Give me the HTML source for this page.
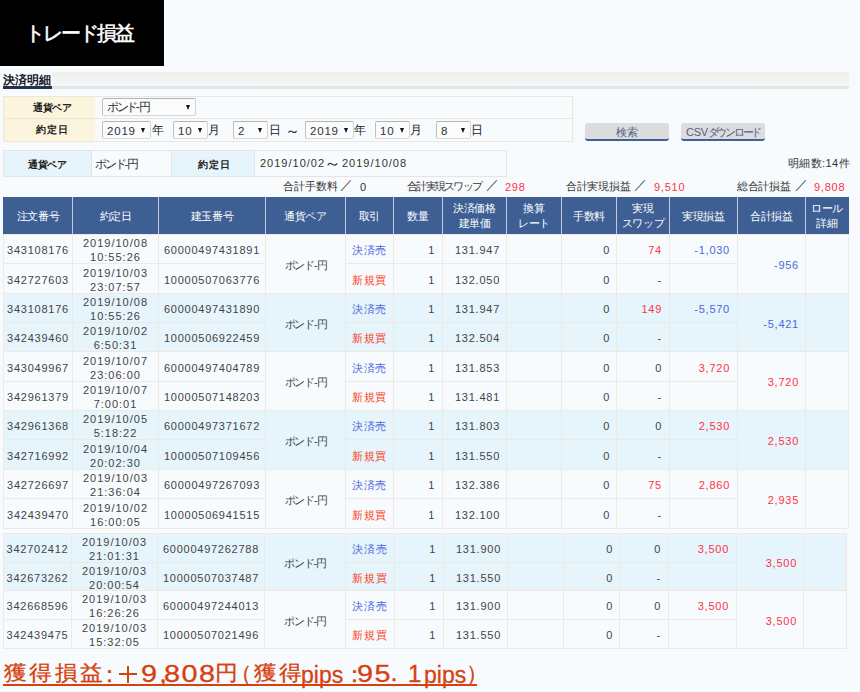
<!DOCTYPE html>
<html lang="ja"><head><meta charset="utf-8"><style>
html,body{margin:0;padding:0;}
i{font-style:normal;letter-spacing:0;margin-right:-1px}
body{width:860px;height:692px;overflow:hidden;background:#f7fbfe;font-family:"Liberation Sans",sans-serif;position:relative;}
body>div{position:absolute;box-sizing:border-box;}
.sel{background:#f9fbfd;border:1px solid;border-color:#b4b4b4 #d4d4d4 #d8d8d8 #c0c0c0;border-radius:2px;font-size:12px;color:#333;}
.sel .sj{position:absolute;left:4px;top:0px;font-size:12px;letter-spacing:-2.4px;}
.sel .sn{position:absolute;left:4px;top:1px;font-size:11.5px;letter-spacing:0.8px;}
.sel .arr{position:absolute;right:5px;top:6px;width:0;height:0;border-left:2.6px solid transparent;border-right:2.6px solid transparent;border-top:5.5px solid #111;}
.jt{font-size:12px;color:#222;line-height:18px;height:18px;}
.sn2{font-size:11px;color:#333;letter-spacing:1px;white-space:nowrap;line-height:16px;height:16px;}
.wv{font-size:15px;letter-spacing:0;margin-top:-1px;}
.tl{font-size:11px;color:#333;white-space:nowrap;line-height:16px;height:16px;}
.tn{font-size:11px;color:#333;white-space:nowrap;line-height:16px;height:16px;letter-spacing:0.75px;padding-top:1px;}
.btn{background:#dcdcdc;border-bottom:2px solid #3f5f99;border-radius:3px;text-align:center;font-size:11px;color:#52608a;white-space:nowrap;padding-top:1px;}
.hd2{padding-top:0 !important;}
.hd{color:#fff;font-size:11px;letter-spacing:-0.4px;padding-top:2px;display:flex;align-items:center;justify-content:center;text-align:center;line-height:15px;}
.c{display:flex;align-items:center;font-size:11px;letter-spacing:0.75px;line-height:14px;white-space:nowrap;padding-top:2px;}
.dt{letter-spacing:1px;}
.pd{letter-spacing:-1.25px;}
.ctr{justify-content:center;}
.rgt{justify-content:flex-end;}
.jp{font-size:11px;}
.ft{color:#d8400e;white-space:nowrap;line-height:30px;-webkit-text-stroke:0.3px #d8400e;}
</style></head><body>
<div style="left:0px;top:0px;width:165px;height:67px;background:#000;border-right:1px solid #fff;border-bottom:1px solid #fff;"></div>
<div style="left:25px;top:19px;color:#fff;font-size:20px;font-weight:normal;-webkit-text-stroke:0.5px #fff;line-height:28px;letter-spacing:-2.0px;white-space:nowrap;">トレード損益</div>
<div style="left:52px;top:72px;width:797px;height:14px;background:linear-gradient(#efeeea,#f2f3f2 50%,#f6f8f9);"></div>
<div style="left:52px;top:86px;width:797px;height:3px;background:#e6e4e4;"></div>
<div style="left:3px;top:86px;width:49px;height:3px;background:#22304e;"></div>
<div style="left:3px;top:72px;font-size:12px;font-weight:bold;color:#1a1a2a;line-height:16px;letter-spacing:0px;white-space:nowrap;">決済明細</div>
<div style="left:3px;top:96px;width:570px;height:46px;background:#f7fbfe;border:1px solid #eee6d6;box-sizing:border-box;"></div>
<div style="left:4px;top:97px;width:91px;height:21px;background:#fcf5de;"></div>
<div style="left:4px;top:119px;width:91px;height:22px;background:#fcf5de;"></div>
<div style="left:4px;top:118px;width:568px;height:1px;background:#f0e4d8;"></div>
<div style="left:7px;top:96px;width:91px;height:21px;line-height:21px;text-align:center;font-size:10px;font-weight:bold;color:#222;letter-spacing:-0.2px;padding-top:1px;">通貨ペア</div>
<div style="left:7px;top:118px;width:91px;height:22px;line-height:22px;text-align:center;font-size:10px;font-weight:bold;color:#222;letter-spacing:1px;padding-top:1px;">約定日</div>
<div class="sel" style="left:102px;top:98px;width:94px;height:18px;line-height:16px;"><span class="sj">ポンド<i>-</i>円</span><span class="arr"></span></div>
<div class="sel" style="left:102px;top:121px;width:49px;height:18px;line-height:16px;"><span class="sn">2019</span><span class="arr"></span></div>
<div class="jt" style="left:152px;top:121px;">年</div>
<div class="sel" style="left:173px;top:121px;width:35px;height:18px;line-height:16px;"><span class="sn">10</span><span class="arr"></span></div>
<div class="jt" style="left:208px;top:121px;">月</div>
<div class="sel" style="left:233px;top:121px;width:35px;height:18px;line-height:16px;"><span class="sn">2</span><span class="arr"></span></div>
<div class="jt" style="left:269px;top:121px;">日</div>
<div class="jt" style="left:285px;top:122px;font-size:15px">～</div>
<div class="sel" style="left:305px;top:121px;width:49px;height:18px;line-height:16px;"><span class="sn">2019</span><span class="arr"></span></div>
<div class="jt" style="left:354px;top:121px;">年</div>
<div class="sel" style="left:375px;top:121px;width:35px;height:18px;line-height:16px;"><span class="sn">10</span><span class="arr"></span></div>
<div class="jt" style="left:410px;top:121px;">月</div>
<div class="sel" style="left:436px;top:121px;width:35px;height:18px;line-height:16px;"><span class="sn">8</span><span class="arr"></span></div>
<div class="jt" style="left:471px;top:121px;">日</div>
<div class="btn" style="left:585px;top:123px;width:84px;height:18px;line-height:17px;letter-spacing:0px">検索</div>
<div class="btn" style="left:681px;top:123px;width:84px;height:18px;line-height:17px;letter-spacing:-2.3px"><span style="letter-spacing:-0.3px">CSV</span>ダウンロード</div>
<div style="left:3px;top:150px;width:504px;height:27px;background:#f8fbfe;border:1px solid #ece4dc;box-sizing:border-box;"></div>
<div style="left:4px;top:151px;width:87px;height:25px;background:#e6f4fb;"></div>
<div style="left:91px;top:151px;width:1px;height:25px;background:#e6e2e2;"></div>
<div style="left:171px;top:151px;width:84px;height:25px;background:#e6f4fb;border-left:1px solid #e6e2e2;border-right:1px solid #e6e2e2;"></div>
<div style="left:4px;top:151px;width:87px;height:25px;line-height:25px;text-align:center;font-size:10px;font-weight:bold;color:#222;letter-spacing:-0.2px;padding-top:1px;">通貨ペア</div>
<div style="left:95px;top:151px;height:25px;line-height:25px;font-size:11.5px;color:#333;letter-spacing:-2.2px;padding-top:1px;">ポンド<i>-</i>円</div>
<div style="left:172px;top:151px;width:84px;height:25px;line-height:25px;text-align:center;font-size:10px;font-weight:bold;color:#222;letter-spacing:1px;padding-top:1px;">約定日</div>
<div class="sn2" style="left:260px;top:155px;">2019/10/02</div>
<div class="sn2 wv" style="left:324px;top:157px;font-size:17px">～</div>
<div class="sn2" style="left:342px;top:155px;">2019/10/08</div>
<div class="sn2" style="left:600px;top:155px;width:250px;text-align:right;letter-spacing:0.4px">明細数:14件</div>
<div class="tl" style="left:283px;top:178px;letter-spacing:0px">合計手数料</div>
<div class="tl" style="left:340px;top:177px;font-size:12.5px">／</div>
<div class="tn" style="left:360px;top:178px;color:#333">0</div>
<div class="tl" style="left:407px;top:178px;letter-spacing:-1.75px">合計実現スワップ</div>
<div class="tl" style="left:486px;top:177px;font-size:12.5px">／</div>
<div class="tn" style="left:505px;top:178px;color:#ff3344">298</div>
<div class="tl" style="left:566px;top:178px;letter-spacing:-0.3px">合計実現損益</div>
<div class="tl" style="left:634px;top:177px;font-size:12.5px">／</div>
<div class="tn" style="left:654px;top:178px;color:#ff3344">9,510</div>
<div class="tl" style="left:737px;top:178px;letter-spacing:-0.3px">総合計損益</div>
<div class="tl" style="left:795px;top:177px;font-size:12.5px">／</div>
<div class="tn" style="left:814px;top:178px;color:#ff3344">9,808</div>
<div style="left:3px;top:197px;width:846px;height:37px;background:#3d5f94;"></div>
<div style="left:72px;top:197px;width:1px;height:37px;background:#c4c8dc;"></div>
<div style="left:158px;top:197px;width:1px;height:37px;background:#c4c8dc;"></div>
<div style="left:265px;top:197px;width:1px;height:37px;background:#c4c8dc;"></div>
<div style="left:345px;top:197px;width:1px;height:37px;background:#c4c8dc;"></div>
<div style="left:393px;top:197px;width:1px;height:37px;background:#c4c8dc;"></div>
<div style="left:442px;top:197px;width:1px;height:37px;background:#c4c8dc;"></div>
<div style="left:506px;top:197px;width:1px;height:37px;background:#c4c8dc;"></div>
<div style="left:561px;top:197px;width:1px;height:37px;background:#c4c8dc;"></div>
<div style="left:616px;top:197px;width:1px;height:37px;background:#c4c8dc;"></div>
<div style="left:669px;top:197px;width:1px;height:37px;background:#c4c8dc;"></div>
<div style="left:737px;top:197px;width:1px;height:37px;background:#c4c8dc;"></div>
<div style="left:805px;top:197px;width:1px;height:37px;background:#c4c8dc;"></div>
<div class="hd" style="left:4px;top:197px;width:68px;height:37px;"><div class="hi">注文番号</div></div>
<div class="hd" style="left:73px;top:197px;width:85px;height:37px;"><div class="hi">約定日</div></div>
<div class="hd" style="left:159px;top:197px;width:106px;height:37px;"><div class="hi">建玉番号</div></div>
<div class="hd" style="left:266px;top:197px;width:79px;height:37px;"><div class="hi">通貨ペア</div></div>
<div class="hd" style="left:346px;top:197px;width:47px;height:37px;"><div class="hi">取引</div></div>
<div class="hd" style="left:394px;top:197px;width:48px;height:37px;"><div class="hi">数量</div></div>
<div class="hd hd2" style="left:443px;top:197px;width:63px;height:37px;"><div class="hi">決済価格<br>建単価</div></div>
<div class="hd hd2" style="left:507px;top:197px;width:54px;height:37px;"><div class="hi">換算<br>レート</div></div>
<div class="hd" style="left:562px;top:197px;width:54px;height:37px;"><div class="hi">手数料</div></div>
<div class="hd hd2" style="left:617px;top:197px;width:52px;height:37px;"><div class="hi">実現<br>スワップ</div></div>
<div class="hd" style="left:670px;top:197px;width:67px;height:37px;"><div class="hi">実現損益</div></div>
<div class="hd" style="left:738px;top:197px;width:67px;height:37px;"><div class="hi">合計損益</div></div>
<div class="hd hd2" style="left:806px;top:197px;width:42px;height:37px;"><div class="hi">ロール<br>詳細</div></div>
<div style="left:3px;top:234px;width:846px;height:59px;background:#f7fbfe;"></div>
<div style="left:3px;top:293px;width:846px;height:58px;background:#e6f4fb;"></div>
<div style="left:3px;top:351px;width:846px;height:59px;background:#f7fbfe;"></div>
<div style="left:3px;top:410px;width:846px;height:59px;background:#e6f4fb;"></div>
<div style="left:3px;top:469px;width:846px;height:59px;background:#f7fbfe;"></div>
<div style="left:3px;top:234px;width:1px;height:295px;background:#eeeae3;"></div>
<div style="left:72px;top:234px;width:1px;height:295px;background:#eeeae3;"></div>
<div style="left:158px;top:234px;width:1px;height:295px;background:#eeeae3;"></div>
<div style="left:265px;top:234px;width:1px;height:295px;background:#eeeae3;"></div>
<div style="left:345px;top:234px;width:1px;height:295px;background:#eeeae3;"></div>
<div style="left:393px;top:234px;width:1px;height:295px;background:#eeeae3;"></div>
<div style="left:442px;top:234px;width:1px;height:295px;background:#eeeae3;"></div>
<div style="left:506px;top:234px;width:1px;height:295px;background:#eeeae3;"></div>
<div style="left:561px;top:234px;width:1px;height:295px;background:#eeeae3;"></div>
<div style="left:616px;top:234px;width:1px;height:295px;background:#eeeae3;"></div>
<div style="left:669px;top:234px;width:1px;height:295px;background:#eeeae3;"></div>
<div style="left:737px;top:234px;width:1px;height:295px;background:#eeeae3;"></div>
<div style="left:805px;top:234px;width:1px;height:295px;background:#eeeae3;"></div>
<div style="left:848px;top:234px;width:1px;height:295px;background:#eeeae3;"></div>
<div style="left:3px;top:234px;width:846px;height:1px;background:#eeeae3;"></div>
<div style="left:3px;top:263px;width:70px;height:1px;background:#eeeae3;"></div>
<div style="left:72px;top:263px;width:87px;height:1px;background:#eeeae3;"></div>
<div style="left:158px;top:263px;width:108px;height:1px;background:#eeeae3;"></div>
<div style="left:345px;top:263px;width:49px;height:1px;background:#eeeae3;"></div>
<div style="left:393px;top:263px;width:50px;height:1px;background:#eeeae3;"></div>
<div style="left:442px;top:263px;width:65px;height:1px;background:#eeeae3;"></div>
<div style="left:506px;top:263px;width:56px;height:1px;background:#eeeae3;"></div>
<div style="left:561px;top:263px;width:56px;height:1px;background:#eeeae3;"></div>
<div style="left:616px;top:263px;width:54px;height:1px;background:#eeeae3;"></div>
<div style="left:669px;top:263px;width:69px;height:1px;background:#eeeae3;"></div>
<div style="left:3px;top:293px;width:846px;height:1px;background:#eeeae3;"></div>
<div style="left:3px;top:322px;width:70px;height:1px;background:#eeeae3;"></div>
<div style="left:72px;top:322px;width:87px;height:1px;background:#eeeae3;"></div>
<div style="left:158px;top:322px;width:108px;height:1px;background:#eeeae3;"></div>
<div style="left:345px;top:322px;width:49px;height:1px;background:#eeeae3;"></div>
<div style="left:393px;top:322px;width:50px;height:1px;background:#eeeae3;"></div>
<div style="left:442px;top:322px;width:65px;height:1px;background:#eeeae3;"></div>
<div style="left:506px;top:322px;width:56px;height:1px;background:#eeeae3;"></div>
<div style="left:561px;top:322px;width:56px;height:1px;background:#eeeae3;"></div>
<div style="left:616px;top:322px;width:54px;height:1px;background:#eeeae3;"></div>
<div style="left:669px;top:322px;width:69px;height:1px;background:#eeeae3;"></div>
<div style="left:3px;top:351px;width:846px;height:1px;background:#eeeae3;"></div>
<div style="left:3px;top:381px;width:70px;height:1px;background:#eeeae3;"></div>
<div style="left:72px;top:381px;width:87px;height:1px;background:#eeeae3;"></div>
<div style="left:158px;top:381px;width:108px;height:1px;background:#eeeae3;"></div>
<div style="left:345px;top:381px;width:49px;height:1px;background:#eeeae3;"></div>
<div style="left:393px;top:381px;width:50px;height:1px;background:#eeeae3;"></div>
<div style="left:442px;top:381px;width:65px;height:1px;background:#eeeae3;"></div>
<div style="left:506px;top:381px;width:56px;height:1px;background:#eeeae3;"></div>
<div style="left:561px;top:381px;width:56px;height:1px;background:#eeeae3;"></div>
<div style="left:616px;top:381px;width:54px;height:1px;background:#eeeae3;"></div>
<div style="left:669px;top:381px;width:69px;height:1px;background:#eeeae3;"></div>
<div style="left:3px;top:410px;width:846px;height:1px;background:#eeeae3;"></div>
<div style="left:3px;top:439px;width:70px;height:1px;background:#eeeae3;"></div>
<div style="left:72px;top:439px;width:87px;height:1px;background:#eeeae3;"></div>
<div style="left:158px;top:439px;width:108px;height:1px;background:#eeeae3;"></div>
<div style="left:345px;top:439px;width:49px;height:1px;background:#eeeae3;"></div>
<div style="left:393px;top:439px;width:50px;height:1px;background:#eeeae3;"></div>
<div style="left:442px;top:439px;width:65px;height:1px;background:#eeeae3;"></div>
<div style="left:506px;top:439px;width:56px;height:1px;background:#eeeae3;"></div>
<div style="left:561px;top:439px;width:56px;height:1px;background:#eeeae3;"></div>
<div style="left:616px;top:439px;width:54px;height:1px;background:#eeeae3;"></div>
<div style="left:669px;top:439px;width:69px;height:1px;background:#eeeae3;"></div>
<div style="left:3px;top:469px;width:846px;height:1px;background:#eeeae3;"></div>
<div style="left:3px;top:498px;width:70px;height:1px;background:#eeeae3;"></div>
<div style="left:72px;top:498px;width:87px;height:1px;background:#eeeae3;"></div>
<div style="left:158px;top:498px;width:108px;height:1px;background:#eeeae3;"></div>
<div style="left:345px;top:498px;width:49px;height:1px;background:#eeeae3;"></div>
<div style="left:393px;top:498px;width:50px;height:1px;background:#eeeae3;"></div>
<div style="left:442px;top:498px;width:65px;height:1px;background:#eeeae3;"></div>
<div style="left:506px;top:498px;width:56px;height:1px;background:#eeeae3;"></div>
<div style="left:561px;top:498px;width:56px;height:1px;background:#eeeae3;"></div>
<div style="left:616px;top:498px;width:54px;height:1px;background:#eeeae3;"></div>
<div style="left:669px;top:498px;width:69px;height:1px;background:#eeeae3;"></div>
<div style="left:3px;top:528px;width:846px;height:1px;background:#eeeae3;"></div>
<div class="c ctr" style="left:4px;top:235px;width:68px;height:28px;text-align:center;color:#444444;"><div class="ci">343108176</div></div>
<div class="c dt ctr" style="left:73px;top:235px;width:85px;height:28px;text-align:center;color:#444444;"><div class="ci">2019/10/08<br>10:55:26</div></div>
<div class="c ctr" style="left:159px;top:235px;width:106px;height:28px;text-align:center;color:#444444;"><div class="ci">60000497431891</div></div>
<div class="c jp ctr" style="left:346px;top:235px;width:47px;height:28px;text-align:center;color:#4a66dd;"><div class="ci">決済売</div></div>
<div class="c rgt" style="left:394px;top:235px;width:48px;height:28px;text-align:right;color:#444444;padding-right:7px;"><div class="ci">1</div></div>
<div class="c rgt" style="left:443px;top:235px;width:63px;height:28px;text-align:right;color:#444444;padding-right:6px;"><div class="ci">131.947</div></div>
<div class="c rgt" style="left:562px;top:235px;width:54px;height:28px;text-align:right;color:#444444;padding-right:6px;"><div class="ci">0</div></div>
<div class="c rgt" style="left:617px;top:235px;width:52px;height:28px;text-align:right;color:#ff3344;padding-right:7px;"><div class="ci">74</div></div>
<div class="c rgt" style="left:670px;top:235px;width:67px;height:28px;text-align:right;color:#4a66dd;padding-right:7px;"><div class="ci">-1,030</div></div>
<div class="c ctr" style="left:4px;top:264px;width:68px;height:29px;text-align:center;color:#444444;"><div class="ci">342727603</div></div>
<div class="c dt ctr" style="left:73px;top:264px;width:85px;height:29px;text-align:center;color:#444444;"><div class="ci">2019/10/03<br>23:07:57</div></div>
<div class="c ctr" style="left:159px;top:264px;width:106px;height:29px;text-align:center;color:#444444;"><div class="ci">10000507063776</div></div>
<div class="c jp ctr" style="left:346px;top:264px;width:47px;height:29px;text-align:center;color:#ff3b22;"><div class="ci">新規買</div></div>
<div class="c rgt" style="left:394px;top:264px;width:48px;height:29px;text-align:right;color:#444444;padding-right:7px;"><div class="ci">1</div></div>
<div class="c rgt" style="left:443px;top:264px;width:63px;height:29px;text-align:right;color:#444444;padding-right:6px;"><div class="ci">132.050</div></div>
<div class="c rgt" style="left:562px;top:264px;width:54px;height:29px;text-align:right;color:#444444;padding-right:6px;"><div class="ci">0</div></div>
<div class="c rgt" style="left:617px;top:264px;width:52px;height:29px;text-align:right;color:#444444;padding-right:7px;"><div class="ci">-</div></div>
<div class="c rgt" style="left:670px;top:264px;width:67px;height:29px;text-align:right;color:#444444;padding-right:7px;"><div class="ci"></div></div>
<div class="c jp pd ctr" style="left:266px;top:235px;width:79px;height:58px;text-align:center;color:#444444;"><div class="ci">ポンド<i>-</i>円</div></div>
<div class="c rgt" style="left:738px;top:235px;width:67px;height:58px;text-align:right;color:#4a66dd;padding-right:6px;"><div class="ci">-956</div></div>
<div class="c ctr" style="left:4px;top:294px;width:68px;height:28px;text-align:center;color:#444444;"><div class="ci">343108176</div></div>
<div class="c dt ctr" style="left:73px;top:294px;width:85px;height:28px;text-align:center;color:#444444;"><div class="ci">2019/10/08<br>10:55:26</div></div>
<div class="c ctr" style="left:159px;top:294px;width:106px;height:28px;text-align:center;color:#444444;"><div class="ci">60000497431890</div></div>
<div class="c jp ctr" style="left:346px;top:294px;width:47px;height:28px;text-align:center;color:#4a66dd;"><div class="ci">決済売</div></div>
<div class="c rgt" style="left:394px;top:294px;width:48px;height:28px;text-align:right;color:#444444;padding-right:7px;"><div class="ci">1</div></div>
<div class="c rgt" style="left:443px;top:294px;width:63px;height:28px;text-align:right;color:#444444;padding-right:6px;"><div class="ci">131.947</div></div>
<div class="c rgt" style="left:562px;top:294px;width:54px;height:28px;text-align:right;color:#444444;padding-right:6px;"><div class="ci">0</div></div>
<div class="c rgt" style="left:617px;top:294px;width:52px;height:28px;text-align:right;color:#ff3344;padding-right:7px;"><div class="ci">149</div></div>
<div class="c rgt" style="left:670px;top:294px;width:67px;height:28px;text-align:right;color:#4a66dd;padding-right:7px;"><div class="ci">-5,570</div></div>
<div class="c ctr" style="left:4px;top:323px;width:68px;height:28px;text-align:center;color:#444444;"><div class="ci">342439460</div></div>
<div class="c dt ctr" style="left:73px;top:323px;width:85px;height:28px;text-align:center;color:#444444;"><div class="ci">2019/10/02<br>6:50:31</div></div>
<div class="c ctr" style="left:159px;top:323px;width:106px;height:28px;text-align:center;color:#444444;"><div class="ci">10000506922459</div></div>
<div class="c jp ctr" style="left:346px;top:323px;width:47px;height:28px;text-align:center;color:#ff3b22;"><div class="ci">新規買</div></div>
<div class="c rgt" style="left:394px;top:323px;width:48px;height:28px;text-align:right;color:#444444;padding-right:7px;"><div class="ci">1</div></div>
<div class="c rgt" style="left:443px;top:323px;width:63px;height:28px;text-align:right;color:#444444;padding-right:6px;"><div class="ci">132.504</div></div>
<div class="c rgt" style="left:562px;top:323px;width:54px;height:28px;text-align:right;color:#444444;padding-right:6px;"><div class="ci">0</div></div>
<div class="c rgt" style="left:617px;top:323px;width:52px;height:28px;text-align:right;color:#444444;padding-right:7px;"><div class="ci">-</div></div>
<div class="c rgt" style="left:670px;top:323px;width:67px;height:28px;text-align:right;color:#444444;padding-right:7px;"><div class="ci"></div></div>
<div class="c jp pd ctr" style="left:266px;top:294px;width:79px;height:57px;text-align:center;color:#444444;"><div class="ci">ポンド<i>-</i>円</div></div>
<div class="c rgt" style="left:738px;top:294px;width:67px;height:57px;text-align:right;color:#4a66dd;padding-right:6px;"><div class="ci">-5,421</div></div>
<div class="c ctr" style="left:4px;top:352px;width:68px;height:29px;text-align:center;color:#444444;"><div class="ci">343049967</div></div>
<div class="c dt ctr" style="left:73px;top:352px;width:85px;height:29px;text-align:center;color:#444444;"><div class="ci">2019/10/07<br>23:06:00</div></div>
<div class="c ctr" style="left:159px;top:352px;width:106px;height:29px;text-align:center;color:#444444;"><div class="ci">60000497404789</div></div>
<div class="c jp ctr" style="left:346px;top:352px;width:47px;height:29px;text-align:center;color:#4a66dd;"><div class="ci">決済売</div></div>
<div class="c rgt" style="left:394px;top:352px;width:48px;height:29px;text-align:right;color:#444444;padding-right:7px;"><div class="ci">1</div></div>
<div class="c rgt" style="left:443px;top:352px;width:63px;height:29px;text-align:right;color:#444444;padding-right:6px;"><div class="ci">131.853</div></div>
<div class="c rgt" style="left:562px;top:352px;width:54px;height:29px;text-align:right;color:#444444;padding-right:6px;"><div class="ci">0</div></div>
<div class="c rgt" style="left:617px;top:352px;width:52px;height:29px;text-align:right;color:#444444;padding-right:7px;"><div class="ci">0</div></div>
<div class="c rgt" style="left:670px;top:352px;width:67px;height:29px;text-align:right;color:#ff3344;padding-right:7px;"><div class="ci">3,720</div></div>
<div class="c ctr" style="left:4px;top:382px;width:68px;height:28px;text-align:center;color:#444444;"><div class="ci">342961379</div></div>
<div class="c dt ctr" style="left:73px;top:382px;width:85px;height:28px;text-align:center;color:#444444;"><div class="ci">2019/10/07<br>7:00:01</div></div>
<div class="c ctr" style="left:159px;top:382px;width:106px;height:28px;text-align:center;color:#444444;"><div class="ci">10000507148203</div></div>
<div class="c jp ctr" style="left:346px;top:382px;width:47px;height:28px;text-align:center;color:#ff3b22;"><div class="ci">新規買</div></div>
<div class="c rgt" style="left:394px;top:382px;width:48px;height:28px;text-align:right;color:#444444;padding-right:7px;"><div class="ci">1</div></div>
<div class="c rgt" style="left:443px;top:382px;width:63px;height:28px;text-align:right;color:#444444;padding-right:6px;"><div class="ci">131.481</div></div>
<div class="c rgt" style="left:562px;top:382px;width:54px;height:28px;text-align:right;color:#444444;padding-right:6px;"><div class="ci">0</div></div>
<div class="c rgt" style="left:617px;top:382px;width:52px;height:28px;text-align:right;color:#444444;padding-right:7px;"><div class="ci">-</div></div>
<div class="c rgt" style="left:670px;top:382px;width:67px;height:28px;text-align:right;color:#444444;padding-right:7px;"><div class="ci"></div></div>
<div class="c jp pd ctr" style="left:266px;top:352px;width:79px;height:58px;text-align:center;color:#444444;"><div class="ci">ポンド<i>-</i>円</div></div>
<div class="c rgt" style="left:738px;top:352px;width:67px;height:58px;text-align:right;color:#ff3344;padding-right:6px;"><div class="ci">3,720</div></div>
<div class="c ctr" style="left:4px;top:411px;width:68px;height:28px;text-align:center;color:#444444;"><div class="ci">342961368</div></div>
<div class="c dt ctr" style="left:73px;top:411px;width:85px;height:28px;text-align:center;color:#444444;"><div class="ci">2019/10/05<br>5:18:22</div></div>
<div class="c ctr" style="left:159px;top:411px;width:106px;height:28px;text-align:center;color:#444444;"><div class="ci">60000497371672</div></div>
<div class="c jp ctr" style="left:346px;top:411px;width:47px;height:28px;text-align:center;color:#4a66dd;"><div class="ci">決済売</div></div>
<div class="c rgt" style="left:394px;top:411px;width:48px;height:28px;text-align:right;color:#444444;padding-right:7px;"><div class="ci">1</div></div>
<div class="c rgt" style="left:443px;top:411px;width:63px;height:28px;text-align:right;color:#444444;padding-right:6px;"><div class="ci">131.803</div></div>
<div class="c rgt" style="left:562px;top:411px;width:54px;height:28px;text-align:right;color:#444444;padding-right:6px;"><div class="ci">0</div></div>
<div class="c rgt" style="left:617px;top:411px;width:52px;height:28px;text-align:right;color:#444444;padding-right:7px;"><div class="ci">0</div></div>
<div class="c rgt" style="left:670px;top:411px;width:67px;height:28px;text-align:right;color:#ff3344;padding-right:7px;"><div class="ci">2,530</div></div>
<div class="c ctr" style="left:4px;top:440px;width:68px;height:29px;text-align:center;color:#444444;"><div class="ci">342716992</div></div>
<div class="c dt ctr" style="left:73px;top:440px;width:85px;height:29px;text-align:center;color:#444444;"><div class="ci">2019/10/04<br>20:02:30</div></div>
<div class="c ctr" style="left:159px;top:440px;width:106px;height:29px;text-align:center;color:#444444;"><div class="ci">10000507109456</div></div>
<div class="c jp ctr" style="left:346px;top:440px;width:47px;height:29px;text-align:center;color:#ff3b22;"><div class="ci">新規買</div></div>
<div class="c rgt" style="left:394px;top:440px;width:48px;height:29px;text-align:right;color:#444444;padding-right:7px;"><div class="ci">1</div></div>
<div class="c rgt" style="left:443px;top:440px;width:63px;height:29px;text-align:right;color:#444444;padding-right:6px;"><div class="ci">131.550</div></div>
<div class="c rgt" style="left:562px;top:440px;width:54px;height:29px;text-align:right;color:#444444;padding-right:6px;"><div class="ci">0</div></div>
<div class="c rgt" style="left:617px;top:440px;width:52px;height:29px;text-align:right;color:#444444;padding-right:7px;"><div class="ci">-</div></div>
<div class="c rgt" style="left:670px;top:440px;width:67px;height:29px;text-align:right;color:#444444;padding-right:7px;"><div class="ci"></div></div>
<div class="c jp pd ctr" style="left:266px;top:411px;width:79px;height:58px;text-align:center;color:#444444;"><div class="ci">ポンド<i>-</i>円</div></div>
<div class="c rgt" style="left:738px;top:411px;width:67px;height:58px;text-align:right;color:#ff3344;padding-right:6px;"><div class="ci">2,530</div></div>
<div class="c ctr" style="left:4px;top:470px;width:68px;height:28px;text-align:center;color:#444444;"><div class="ci">342726697</div></div>
<div class="c dt ctr" style="left:73px;top:470px;width:85px;height:28px;text-align:center;color:#444444;"><div class="ci">2019/10/03<br>21:36:04</div></div>
<div class="c ctr" style="left:159px;top:470px;width:106px;height:28px;text-align:center;color:#444444;"><div class="ci">60000497267093</div></div>
<div class="c jp ctr" style="left:346px;top:470px;width:47px;height:28px;text-align:center;color:#4a66dd;"><div class="ci">決済売</div></div>
<div class="c rgt" style="left:394px;top:470px;width:48px;height:28px;text-align:right;color:#444444;padding-right:7px;"><div class="ci">1</div></div>
<div class="c rgt" style="left:443px;top:470px;width:63px;height:28px;text-align:right;color:#444444;padding-right:6px;"><div class="ci">132.386</div></div>
<div class="c rgt" style="left:562px;top:470px;width:54px;height:28px;text-align:right;color:#444444;padding-right:6px;"><div class="ci">0</div></div>
<div class="c rgt" style="left:617px;top:470px;width:52px;height:28px;text-align:right;color:#ff3344;padding-right:7px;"><div class="ci">75</div></div>
<div class="c rgt" style="left:670px;top:470px;width:67px;height:28px;text-align:right;color:#ff3344;padding-right:7px;"><div class="ci">2,860</div></div>
<div class="c ctr" style="left:4px;top:499px;width:68px;height:29px;text-align:center;color:#444444;"><div class="ci">342439470</div></div>
<div class="c dt ctr" style="left:73px;top:499px;width:85px;height:29px;text-align:center;color:#444444;"><div class="ci">2019/10/02<br>16:00:05</div></div>
<div class="c ctr" style="left:159px;top:499px;width:106px;height:29px;text-align:center;color:#444444;"><div class="ci">10000506941515</div></div>
<div class="c jp ctr" style="left:346px;top:499px;width:47px;height:29px;text-align:center;color:#ff3b22;"><div class="ci">新規買</div></div>
<div class="c rgt" style="left:394px;top:499px;width:48px;height:29px;text-align:right;color:#444444;padding-right:7px;"><div class="ci">1</div></div>
<div class="c rgt" style="left:443px;top:499px;width:63px;height:29px;text-align:right;color:#444444;padding-right:6px;"><div class="ci">132.100</div></div>
<div class="c rgt" style="left:562px;top:499px;width:54px;height:29px;text-align:right;color:#444444;padding-right:6px;"><div class="ci">0</div></div>
<div class="c rgt" style="left:617px;top:499px;width:52px;height:29px;text-align:right;color:#444444;padding-right:7px;"><div class="ci">-</div></div>
<div class="c rgt" style="left:670px;top:499px;width:67px;height:29px;text-align:right;color:#444444;padding-right:7px;"><div class="ci"></div></div>
<div class="c jp pd ctr" style="left:266px;top:470px;width:79px;height:58px;text-align:center;color:#444444;"><div class="ci">ポンド<i>-</i>円</div></div>
<div class="c rgt" style="left:738px;top:470px;width:67px;height:58px;text-align:right;color:#ff3344;padding-right:6px;"><div class="ci">2,935</div></div>
<div style="left:3px;top:533px;width:844px;height:57px;background:#e6f4fb;"></div>
<div style="left:3px;top:590px;width:844px;height:58px;background:#f7fbfe;"></div>
<div style="left:3px;top:533px;width:1px;height:116px;background:#eeeae3;"></div>
<div style="left:71px;top:533px;width:1px;height:116px;background:#eeeae3;"></div>
<div style="left:157px;top:533px;width:1px;height:116px;background:#eeeae3;"></div>
<div style="left:264px;top:533px;width:1px;height:116px;background:#eeeae3;"></div>
<div style="left:345px;top:533px;width:1px;height:116px;background:#eeeae3;"></div>
<div style="left:394px;top:533px;width:1px;height:116px;background:#eeeae3;"></div>
<div style="left:443px;top:533px;width:1px;height:116px;background:#eeeae3;"></div>
<div style="left:507px;top:533px;width:1px;height:116px;background:#eeeae3;"></div>
<div style="left:563px;top:533px;width:1px;height:116px;background:#eeeae3;"></div>
<div style="left:619px;top:533px;width:1px;height:116px;background:#eeeae3;"></div>
<div style="left:668px;top:533px;width:1px;height:116px;background:#eeeae3;"></div>
<div style="left:736px;top:533px;width:1px;height:116px;background:#eeeae3;"></div>
<div style="left:803px;top:533px;width:1px;height:116px;background:#eeeae3;"></div>
<div style="left:846px;top:533px;width:1px;height:116px;background:#eeeae3;"></div>
<div style="left:3px;top:533px;width:844px;height:1px;background:#eeeae3;"></div>
<div style="left:3px;top:562px;width:69px;height:1px;background:#eeeae3;"></div>
<div style="left:71px;top:562px;width:87px;height:1px;background:#eeeae3;"></div>
<div style="left:157px;top:562px;width:108px;height:1px;background:#eeeae3;"></div>
<div style="left:345px;top:562px;width:50px;height:1px;background:#eeeae3;"></div>
<div style="left:394px;top:562px;width:50px;height:1px;background:#eeeae3;"></div>
<div style="left:443px;top:562px;width:65px;height:1px;background:#eeeae3;"></div>
<div style="left:507px;top:562px;width:57px;height:1px;background:#eeeae3;"></div>
<div style="left:563px;top:562px;width:57px;height:1px;background:#eeeae3;"></div>
<div style="left:619px;top:562px;width:50px;height:1px;background:#eeeae3;"></div>
<div style="left:668px;top:562px;width:69px;height:1px;background:#eeeae3;"></div>
<div style="left:3px;top:590px;width:844px;height:1px;background:#eeeae3;"></div>
<div style="left:3px;top:619px;width:69px;height:1px;background:#eeeae3;"></div>
<div style="left:71px;top:619px;width:87px;height:1px;background:#eeeae3;"></div>
<div style="left:157px;top:619px;width:108px;height:1px;background:#eeeae3;"></div>
<div style="left:345px;top:619px;width:50px;height:1px;background:#eeeae3;"></div>
<div style="left:394px;top:619px;width:50px;height:1px;background:#eeeae3;"></div>
<div style="left:443px;top:619px;width:65px;height:1px;background:#eeeae3;"></div>
<div style="left:507px;top:619px;width:57px;height:1px;background:#eeeae3;"></div>
<div style="left:563px;top:619px;width:57px;height:1px;background:#eeeae3;"></div>
<div style="left:619px;top:619px;width:50px;height:1px;background:#eeeae3;"></div>
<div style="left:668px;top:619px;width:69px;height:1px;background:#eeeae3;"></div>
<div style="left:3px;top:648px;width:844px;height:1px;background:#eeeae3;"></div>
<div class="c ctr" style="left:4px;top:534px;width:67px;height:28px;text-align:center;color:#444444;"><div class="ci">342702412</div></div>
<div class="c dt ctr" style="left:72px;top:534px;width:85px;height:28px;text-align:center;color:#444444;"><div class="ci">2019/10/03<br>21:01:31</div></div>
<div class="c ctr" style="left:158px;top:534px;width:106px;height:28px;text-align:center;color:#444444;"><div class="ci">60000497262788</div></div>
<div class="c jp ctr" style="left:346px;top:534px;width:48px;height:28px;text-align:center;color:#4a66dd;"><div class="ci">決済売</div></div>
<div class="c rgt" style="left:395px;top:534px;width:48px;height:28px;text-align:right;color:#444444;padding-right:7px;"><div class="ci">1</div></div>
<div class="c rgt" style="left:444px;top:534px;width:63px;height:28px;text-align:right;color:#444444;padding-right:6px;"><div class="ci">131.900</div></div>
<div class="c rgt" style="left:564px;top:534px;width:55px;height:28px;text-align:right;color:#444444;padding-right:6px;"><div class="ci">0</div></div>
<div class="c rgt" style="left:620px;top:534px;width:48px;height:28px;text-align:right;color:#444444;padding-right:7px;"><div class="ci">0</div></div>
<div class="c rgt" style="left:669px;top:534px;width:67px;height:28px;text-align:right;color:#ff3344;padding-right:7px;"><div class="ci">3,500</div></div>
<div class="c ctr" style="left:4px;top:563px;width:67px;height:27px;text-align:center;color:#444444;"><div class="ci">342673262</div></div>
<div class="c dt ctr" style="left:72px;top:563px;width:85px;height:27px;text-align:center;color:#444444;"><div class="ci">2019/10/03<br>20:00:54</div></div>
<div class="c ctr" style="left:158px;top:563px;width:106px;height:27px;text-align:center;color:#444444;"><div class="ci">10000507037487</div></div>
<div class="c jp ctr" style="left:346px;top:563px;width:48px;height:27px;text-align:center;color:#ff3b22;"><div class="ci">新規買</div></div>
<div class="c rgt" style="left:395px;top:563px;width:48px;height:27px;text-align:right;color:#444444;padding-right:7px;"><div class="ci">1</div></div>
<div class="c rgt" style="left:444px;top:563px;width:63px;height:27px;text-align:right;color:#444444;padding-right:6px;"><div class="ci">131.550</div></div>
<div class="c rgt" style="left:564px;top:563px;width:55px;height:27px;text-align:right;color:#444444;padding-right:6px;"><div class="ci">0</div></div>
<div class="c rgt" style="left:620px;top:563px;width:48px;height:27px;text-align:right;color:#444444;padding-right:7px;"><div class="ci">-</div></div>
<div class="c rgt" style="left:669px;top:563px;width:67px;height:27px;text-align:right;color:#444444;padding-right:7px;"><div class="ci"></div></div>
<div class="c jp pd ctr" style="left:265px;top:534px;width:80px;height:56px;text-align:center;color:#444444;"><div class="ci">ポンド<i>-</i>円</div></div>
<div class="c rgt" style="left:737px;top:534px;width:66px;height:56px;text-align:right;color:#ff3344;padding-right:6px;"><div class="ci">3,500</div></div>
<div class="c ctr" style="left:4px;top:591px;width:67px;height:28px;text-align:center;color:#444444;"><div class="ci">342668596</div></div>
<div class="c dt ctr" style="left:72px;top:591px;width:85px;height:28px;text-align:center;color:#444444;"><div class="ci">2019/10/03<br>16:26:26</div></div>
<div class="c ctr" style="left:158px;top:591px;width:106px;height:28px;text-align:center;color:#444444;"><div class="ci">60000497244013</div></div>
<div class="c jp ctr" style="left:346px;top:591px;width:48px;height:28px;text-align:center;color:#4a66dd;"><div class="ci">決済売</div></div>
<div class="c rgt" style="left:395px;top:591px;width:48px;height:28px;text-align:right;color:#444444;padding-right:7px;"><div class="ci">1</div></div>
<div class="c rgt" style="left:444px;top:591px;width:63px;height:28px;text-align:right;color:#444444;padding-right:6px;"><div class="ci">131.900</div></div>
<div class="c rgt" style="left:564px;top:591px;width:55px;height:28px;text-align:right;color:#444444;padding-right:6px;"><div class="ci">0</div></div>
<div class="c rgt" style="left:620px;top:591px;width:48px;height:28px;text-align:right;color:#444444;padding-right:7px;"><div class="ci">0</div></div>
<div class="c rgt" style="left:669px;top:591px;width:67px;height:28px;text-align:right;color:#ff3344;padding-right:7px;"><div class="ci">3,500</div></div>
<div class="c ctr" style="left:4px;top:620px;width:67px;height:28px;text-align:center;color:#444444;"><div class="ci">342439475</div></div>
<div class="c dt ctr" style="left:72px;top:620px;width:85px;height:28px;text-align:center;color:#444444;"><div class="ci">2019/10/03<br>15:32:05</div></div>
<div class="c ctr" style="left:158px;top:620px;width:106px;height:28px;text-align:center;color:#444444;"><div class="ci">10000507021496</div></div>
<div class="c jp ctr" style="left:346px;top:620px;width:48px;height:28px;text-align:center;color:#ff3b22;"><div class="ci">新規買</div></div>
<div class="c rgt" style="left:395px;top:620px;width:48px;height:28px;text-align:right;color:#444444;padding-right:7px;"><div class="ci">1</div></div>
<div class="c rgt" style="left:444px;top:620px;width:63px;height:28px;text-align:right;color:#444444;padding-right:6px;"><div class="ci">131.550</div></div>
<div class="c rgt" style="left:564px;top:620px;width:55px;height:28px;text-align:right;color:#444444;padding-right:6px;"><div class="ci">0</div></div>
<div class="c rgt" style="left:620px;top:620px;width:48px;height:28px;text-align:right;color:#444444;padding-right:7px;"><div class="ci">-</div></div>
<div class="c rgt" style="left:669px;top:620px;width:67px;height:28px;text-align:right;color:#444444;padding-right:7px;"><div class="ci"></div></div>
<div class="c jp pd ctr" style="left:265px;top:591px;width:80px;height:57px;text-align:center;color:#444444;"><div class="ci">ポンド<i>-</i>円</div></div>
<div class="c rgt" style="left:737px;top:591px;width:66px;height:57px;text-align:right;color:#ff3344;padding-right:6px;"><div class="ci">3,500</div></div>
<div class="ft" style="left:4px;top:656px;font-size:23px;letter-spacing:2.3px;transform:scaleY(0.92);transform-origin:0 100%;">獲得損益</div>
<div class="ft" style="left:98px;top:659px;font-size:23px;letter-spacing:0px;">：</div>
<div style="left:119px;top:673px;width:18px;height:2px;background:#d8400e;"></div>
<div style="left:127px;top:666px;width:2px;height:17px;background:#d8400e;"></div>
<div class="ft" style="left:141px;top:659px;font-size:24px;letter-spacing:0px;transform:scaleX(1.2);transform-origin:0 0;">9</div>
<div class="ft" style="left:159px;top:659px;font-size:24px;letter-spacing:0px;transform:scaleX(1.2);transform-origin:0 0;">,</div>
<div class="ft" style="left:164px;top:659px;font-size:24px;letter-spacing:1.2px;transform:scaleX(1.2);transform-origin:0 0;">808</div>
<div class="ft" style="left:215px;top:656px;font-size:23px;letter-spacing:0px;transform:scaleY(0.92);transform-origin:0 100%;">円</div>
<div class="ft" style="left:230px;top:659px;font-size:22px;letter-spacing:0px;">（</div>
<div class="ft" style="left:254px;top:656px;font-size:23px;letter-spacing:2.3px;transform:scaleY(0.92);transform-origin:0 100%;">獲得</div>
<div class="ft" style="left:301px;top:660px;font-size:23px;letter-spacing:0px;">pips</div>
<div class="ft" style="left:343px;top:659px;font-size:23px;letter-spacing:0px;">：</div>
<div class="ft" style="left:357px;top:659px;font-size:24px;letter-spacing:1.2px;transform:scaleX(1.2);transform-origin:0 0;">95</div>
<div class="ft" style="left:383px;top:659px;font-size:22px;letter-spacing:0px;">．</div>
<div class="ft" style="left:408px;top:659px;font-size:24px;letter-spacing:0px;">1</div>
<div class="ft" style="left:424px;top:660px;font-size:23px;letter-spacing:0px;">pips</div>
<div class="ft" style="left:466px;top:659px;font-size:22px;letter-spacing:0px;">）</div>
<div style="left:3px;top:684px;width:474px;height:2px;background:#d8400e;"></div>
</body></html>
